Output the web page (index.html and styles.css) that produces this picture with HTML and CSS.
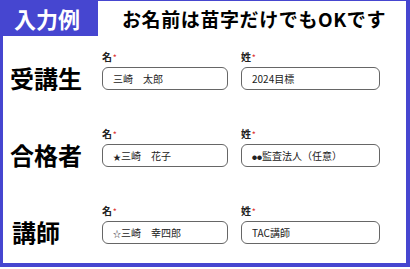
FILE: index.html
```html
<!DOCTYPE html>
<html lang="ja">
<head>
  <meta charset="UTF-8" />
  <meta name="viewport" content="width=device-width, initial-scale=1.0"/>
  <title>入力例</title>
  <link rel="stylesheet" href="styles.css">
</head>
<body>
  <div class="frame">
    <div class="header">
      <div class="tag">入力例</div>
      <div class="title">お名前は苗字だけでもOKです</div>
    </div>

    <div class="row">
      <div class="role">受講生</div>
      <div class="field first">
        <div class="field-label">名<span class="req">*</span></div>
        <div class="input">三崎　太郎</div>
      </div>
      <div class="field second">
        <div class="field-label">姓<span class="req">*</span></div>
        <div class="input">2024目標</div>
      </div>
    </div>

    <div class="row">
      <div class="role">合格者</div>
      <div class="field first">
        <div class="field-label">名<span class="req">*</span></div>
        <div class="input"><span class="mark">★</span>三崎　花子</div>
      </div>
      <div class="field second">
        <div class="field-label">姓<span class="req">*</span></div>
        <div class="input"><span class="dots">●●</span>監査法人（任意）</div>
      </div>
    </div>

    <div class="row">
      <div class="role short">講師</div>
      <div class="field first">
        <div class="field-label">名<span class="req">*</span></div>
        <div class="input"><span class="mark">☆</span>三崎　幸四郎</div>
      </div>
      <div class="field second">
        <div class="field-label">姓<span class="req">*</span></div>
        <div class="input">TAC講師</div>
      </div>
    </div>
  </div>
</body>
</html>
```

FILE: styles.css
```css
body {
  margin: 0;
  background: #fff;
  font-family: "Noto Sans CJK JP", "Noto Sans", sans-serif;
  color: #111;
}

.frame {
  width: 410px;
  height: 267px;
  box-sizing: border-box;
  border-style: solid;
  border-color: #4646d0;
  border-width: 1px 4px 4px 3px;
  background: #fff;
}

.header {
  display: flex;
  align-items: center;
  height: 35px;
}

.tag {
  width: 95px;
  height: 35px;
  background: #4646d0;
  color: #fff;
  font-size: 22px;
  font-weight: bold;
  line-height: 35px;
  padding-left: 11px;
  box-sizing: border-box;
}

.title {
  margin-left: 24px;
  font-size: 19px;
  letter-spacing: 0.6px;
  font-weight: bold;
  color: #000;
}

.row {
  display: flex;
  align-items: flex-end;
  gap: 13px;
  padding: 14px 0 23px;
}

.role {
  width: 86px;
  flex: none;
  box-sizing: border-box;
  font-size: 24px;
  font-weight: bold;
  color: #000;
  line-height: 28px;
  padding-left: 7px;
  margin-bottom: -2px;
}

.role.short {
  padding-left: 9px;
}

.field {
  flex: none;
}

.field.first {
  width: 126px;
}

.field.second {
  width: 139px;
}

.field-label {
  font-size: 10px;
  font-weight: bold;
  line-height: 14px;
  margin-bottom: 3px;
  color: #222;
}

.req {
  color: #d33;
  font-size: 7px;
  vertical-align: top;
  margin-left: 1px;
}

.input {
  height: 23px;
  box-sizing: border-box;
  border: 1px solid #666;
  border-radius: 6px;
  padding-left: 10px;
  font-size: 10px;
  line-height: 21px;
  color: #222;
}

.mark {
  font-size: 8px;
}

.dots {
  font-size: 5px;
  vertical-align: 1px;
}
```
